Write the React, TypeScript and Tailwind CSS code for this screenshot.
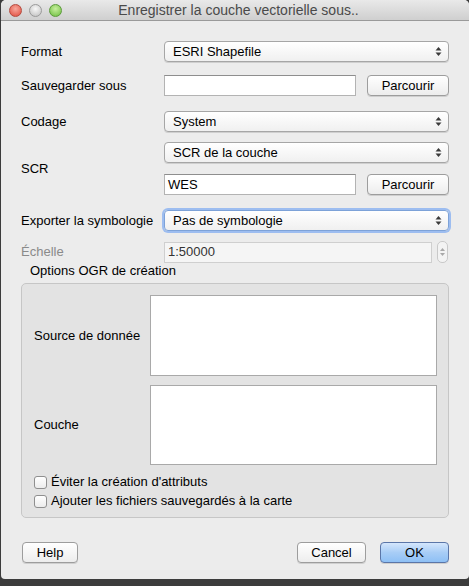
import React from 'react';

const font = { fontFamily: '"Liberation Sans", "DejaVu Sans", sans-serif' };

function Arrows() {
  return (
    <svg width="7" height="11" viewBox="0 0 7 11" className="shrink-0">
      <path d="M3.5 1 L6.5 4.5 L0.5 4.5 Z" fill="#3a3a3a" />
      <path d="M3.5 10 L6.5 6.5 L0.5 6.5 Z" fill="#3a3a3a" />
    </svg>
  );
}

function Combo({ text, focus = false }: { text: string; focus?: boolean }) {
  return (
    <div
      className={`flex h-[21px] w-[285px] items-center justify-between rounded-[4px] border bg-gradient-to-b from-white to-[#f0f0f0] pl-[8px] pr-[6px] text-[13px] text-black shadow-[0_1px_0_rgba(0,0,0,0.12)] ${
        focus ? 'border-[#7da2d8] ring-[2px] ring-[#9dbdf0]' : 'border-[#a6a6a6]'
      }`}
    >
      <span>{text}</span>
      <Arrows />
    </div>
  );
}

function TextInput({ value = '', w = 'w-[192px]' }: { value?: string; w?: string }) {
  return (
    <div
      className={`flex h-[21px] ${w} items-center border border-[#b3b3b3] border-t-[#8e8e8e] bg-white pl-[3px] text-[13px] text-black`}
    >
      {value}
    </div>
  );
}

function Button({ label, w, primary = false }: { label: string; w: string; primary?: boolean }) {
  return (
    <div
      className={`flex h-[21px] ${w} items-center justify-center rounded-[4px] border text-[13px] text-black shadow-[0_1px_0_rgba(0,0,0,0.12)] ${
        primary
          ? 'border-[#5b76a8] bg-gradient-to-b from-[#d4e6fc] via-[#a8cdf6] to-[#8ec0f5]'
          : 'border-[#9d9d9d] bg-gradient-to-b from-white to-[#ededed]'
      }`}
    >
      {label}
    </div>
  );
}

function Checkbox({ label }: { label: string }) {
  return (
    <div className="flex h-[14px] items-center gap-[4px]">
      <div className="h-[13px] w-[13px] rounded-[3px] border border-[#8f8f8f] bg-gradient-to-b from-white to-[#ececec]" />
      <span className="text-[13px] text-black">{label}</span>
    </div>
  );
}

function Label({ children, gray = false }: { children: React.ReactNode; gray?: boolean }) {
  return (
    <div className={`w-[143px] shrink-0 text-[13px] ${gray ? 'text-[#8a8a8a]' : 'text-black'}`}>{children}</div>
  );
}

export default function App() {
  return (
    <div className="h-[586px] w-[469px] overflow-hidden bg-[#3c3c3c]" style={font}>
      <div className="ml-[1px] flex h-[579px] flex-col overflow-hidden rounded-t-[5px] rounded-b-[4px] bg-[#ececec]">
        {/* barre de titre */}
        <div className="flex h-[21px] shrink-0 items-center border-b border-[#9a9a9a] bg-gradient-to-b from-[#e9e9e9] to-[#cfcfcf] pl-[8px]">
          <div className="flex gap-[7px]">
            <div className="h-[13px] w-[13px] rounded-full border border-[#b44a3e] bg-[radial-gradient(circle_at_50%_35%,#f7a89c,#e0493a)]" />
            <div className="h-[13px] w-[13px] rounded-full border border-[#9a9a9a] bg-[radial-gradient(circle_at_50%_35%,#f8f8f8,#bdbdbd)]" />
            <div className="h-[13px] w-[13px] rounded-full border border-[#5b9a3a] bg-[radial-gradient(circle_at_50%_35%,#c7ef9d,#6bbd3e)]" />
          </div>
          <div className="flex-1 pr-[54px] text-center text-[14px] text-[#4a4a4a]">
            Enregistrer la couche vectorielle sous..
          </div>
        </div>

        <div className="flex flex-col pl-[20px] pr-[20px]">
          {/* Format */}
          <div className="mt-[20px] flex h-[21px] items-center">
            <Label>Format</Label>
            <Combo text="ESRI Shapefile" />
          </div>
          {/* Sauvegarder sous */}
          <div className="mt-[13px] flex h-[21px] items-center">
            <Label>Sauvegarder sous</Label>
            <TextInput />
            <div className="ml-[11px]">
              <Button label="Parcourir" w="w-[82px]" />
            </div>
          </div>
          {/* Codage */}
          <div className="mt-[15px] flex h-[21px] items-center">
            <Label>Codage</Label>
            <Combo text="System" />
          </div>
          {/* SCR */}
          <div className="mt-[10px] flex items-center">
            <Label>SCR</Label>
            <div className="flex flex-col gap-[11px]">
              <Combo text="SCR de la couche" />
              <div className="flex items-center">
                <TextInput value="WES" />
                <div className="ml-[11px]">
                  <Button label="Parcourir" w="w-[82px]" />
                </div>
              </div>
            </div>
          </div>
          {/* Exporter la symbologie */}
          <div className="mt-[15px] flex h-[21px] items-center">
            <Label>Exporter la symbologie</Label>
            <Combo text="Pas de symbologie" focus />
          </div>
          {/* Échelle */}
          <div className="mt-[10px] flex h-[22px] items-center">
            <Label gray>Échelle</Label>
            <div className="flex h-[21px] w-[268px] items-center border border-[#cfcfcf] bg-[#f5f5f5] pl-[3px] text-[13px] text-[#333]">
              1:50000
            </div>
            <div className="ml-[5px] flex h-[22px] w-[11px] flex-col items-center justify-center gap-[2px] rounded-[5px] border border-[#c9c9c9] bg-[#f3f3f3]">
              <svg width="5" height="3" viewBox="0 0 5 3">
                <path d="M2.5 0 L5 3 L0 3 Z" fill="#a8a8a8" />
              </svg>
              <svg width="5" height="3" viewBox="0 0 5 3">
                <path d="M2.5 3 L5 0 L0 0 Z" fill="#a8a8a8" />
              </svg>
            </div>
          </div>
          {/* Options OGR */}
          <div className="mt-0 pl-[9px] text-[13px] leading-[16px] text-black">Options OGR de création</div>
          <div className="mt-[4px] flex h-[235px] flex-col rounded-[5px] border border-[#c6c6c6] bg-[#e3e3e3] pl-[12px] pr-[11px] pt-[11px]">
            <div className="flex items-center">
              <div className="w-[116px] shrink-0 text-[13px] text-black">Source de donnée</div>
              <div className="h-[81px] flex-1 border border-[#a9a9a9] bg-white" />
            </div>
            <div className="mt-[9px] flex items-center">
              <div className="w-[116px] shrink-0 text-[13px] text-black">Couche</div>
              <div className="h-[80px] flex-1 border border-[#a9a9a9] bg-white" />
            </div>
            <div className="mt-[10px] flex flex-col gap-[5px]">
              <Checkbox label="Éviter la création d'attributs" />
              <Checkbox label="Ajouter les fichiers sauvegardés à la carte" />
            </div>
          </div>
          {/* Boutons */}
          <div className="mt-[24px] flex h-[21px] items-center">
            <div className="ml-[1px]">
              <Button label="Help" w="w-[56px]" />
            </div>
            <div className="flex-1" />
            <Button label="Cancel" w="w-[69px]" />
            <div className="ml-[14px]">
              <Button label="OK" w="w-[69px]" primary />
            </div>
          </div>
        </div>
      </div>
    </div>
  );
}
